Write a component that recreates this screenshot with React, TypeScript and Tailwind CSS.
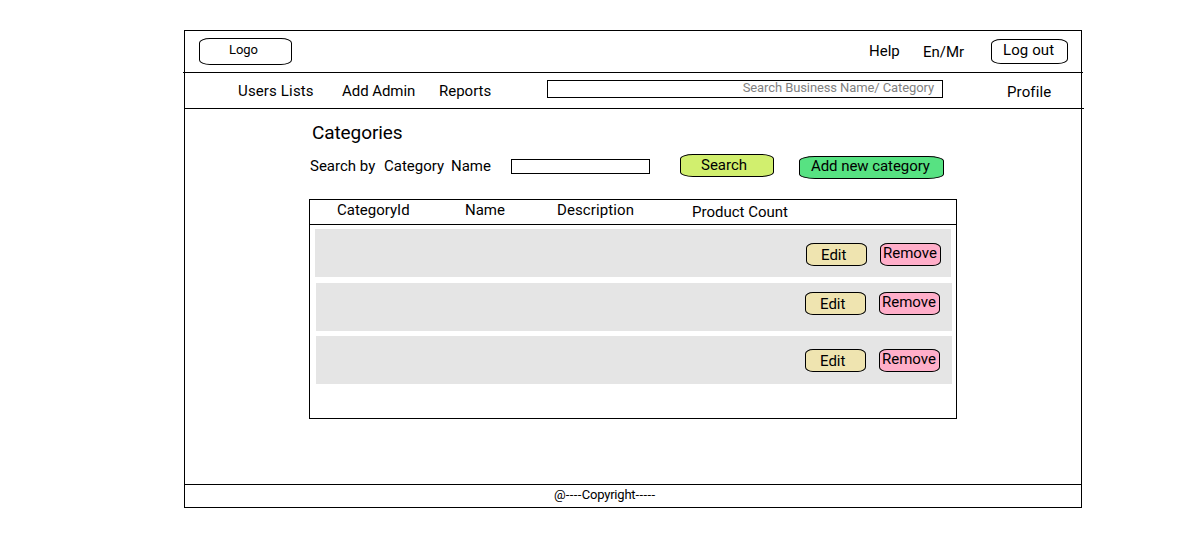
import type { ReactNode } from "react";

function Label({ className, children }: { className: string; children: ReactNode }) {
  return <span className={`block shrink-0 whitespace-pre ${className}`}>{children}</span>;
}

function Pill({ className, children }: { className: string; children: ReactNode }) {
  return (
    <button type="button" className={`flex shrink-0 items-start border border-black whitespace-pre ${className}`}>
      {children}
    </button>
  );
}

const rows = [
  { id: 1, box: "ml-[5px] mt-1 pr-[10px]", actions: "pt-3.5" },
  { id: 2, box: "ml-1.5 mt-1.5 pr-3", actions: "pt-[9px]" },
  { id: 3, box: "ml-1.5 mt-[5px] pr-3", actions: "pt-[13px]" },
];

function CategoryRow({ box, actions }: { box: string; actions: string }) {
  return (
    <div className={`flex h-12 w-[636px] items-start justify-end gap-[13px] bg-[#e5e5e5] ${box} ${actions}`}>
      <Pill className="h-[23px] w-[61px] rounded-[8px/5px] bg-[#efe4b0] pt-[2px] pl-[14px]">Edit</Pill>
      <Pill className="h-[23px] w-[61px] rounded-[8px/5px] bg-[#ffaec9] pl-[2px]">Remove</Pill>
    </div>
  );
}

export default function App() {
  return (
    <div className="h-[542px] w-[1196px] bg-white pt-[30px] pl-[184px] font-['Roboto',sans-serif] text-[15px] leading-[18px] text-black">
      <div className="flex h-[478px] w-[898px] flex-col border border-black">
        <header className="-mx-[2px] flex h-[42px] shrink-0 items-start border-b border-black pl-4">
          <Pill className="mt-[7px] h-[27px] w-[93px] rounded-[11px/5px] pt-[3px] pl-[29px] text-[13px] leading-4 tracking-[-0.1px]">Logo</Pill>
          <Label className="mt-[11px] ml-[577px] w-[54px]">Help</Label>
          <Label className="mt-3 w-[68px]">En/Mr</Label>
          <Pill className="mt-2 h-[25px] w-[77px] rounded-[10px/5px] pt-px pl-[11px] tracking-[0.1px]">Log out</Pill>
        </header>

        <nav className="-mr-[3px] -ml-px flex h-9 shrink-0 items-start border-b border-black pl-[54px]">
          <Label className="mt-[9px] w-[104px] tracking-[0.15px]">Users Lists</Label>
          <Label className="mt-[9px] w-[97px] tracking-[-0.05px]">Add Admin</Label>
          <Label className="mt-[9px] w-[108px]">Reports</Label>
          <div className="mt-[7px] h-[18px] w-[396px] shrink-0 border border-black pr-2 text-right text-[13px] leading-[14px] tracking-[-0.1px] text-[#7f7f7f]">
            Search Business Name/ Category
          </div>
          <Label className="mt-[10px] ml-16 tracking-[0.12px]">Profile</Label>
        </nav>

        <main className="flex flex-1 flex-col items-start pl-[124px]">
          <h1 className="mt-[13px] ml-[3px] text-[19px] leading-[22px] tracking-[-0.1px]">Categories</h1>
          <div className="mt-[10px] flex h-[25px] items-start pl-px">
            <Label className="mt-[3px] w-[74px]">Search by</Label>
            <Label className="mt-[3px] w-[67px]">Category</Label>
            <Label className="mt-[3px] w-[60px]">Name</Label>
            <div className="mt-[5px] h-[15px] w-[139px] border border-black" />
            <Pill className="ml-[30px] h-[23px] w-[94px] rounded-[13px/5px] bg-[#d1ef6e] pt-px pl-5">Search</Pill>
            <Pill className="mt-[2px] ml-[25px] h-[23px] w-[145px] rounded-[16px/5px] bg-[#57e282] pl-[11px] tracking-[-0.06px]">Add new category</Pill>
          </div>

          <section className="mt-5 h-[220px] w-[648px] border border-black">
            <div className="flex h-[25px] items-start border-b border-black pl-[27px]">
              <Label className="mt-px w-32">CategoryId</Label>
              <Label className="mt-px w-[92px]">Name</Label>
              <Label className="mt-px w-[135px] tracking-[0.1px]">Description</Label>
              <Label className="mt-[3px]">Product Count</Label>
            </div>
            {rows.map((row) => (
              <CategoryRow key={row.id} box={row.box} actions={row.actions} />
            ))}
          </section>
        </main>

        <footer className="flex h-[23px] shrink-0 border-t border-black pt-[2px] pl-[369px] text-[13px] leading-4">
          <span>@</span>
          <span className="tracking-[0.4px]">----</span>
          <span className="tracking-[-0.2px]">Copyright</span>
          <span className="tracking-[0.4px]">-----</span>
        </footer>
      </div>
    </div>
  );
}
